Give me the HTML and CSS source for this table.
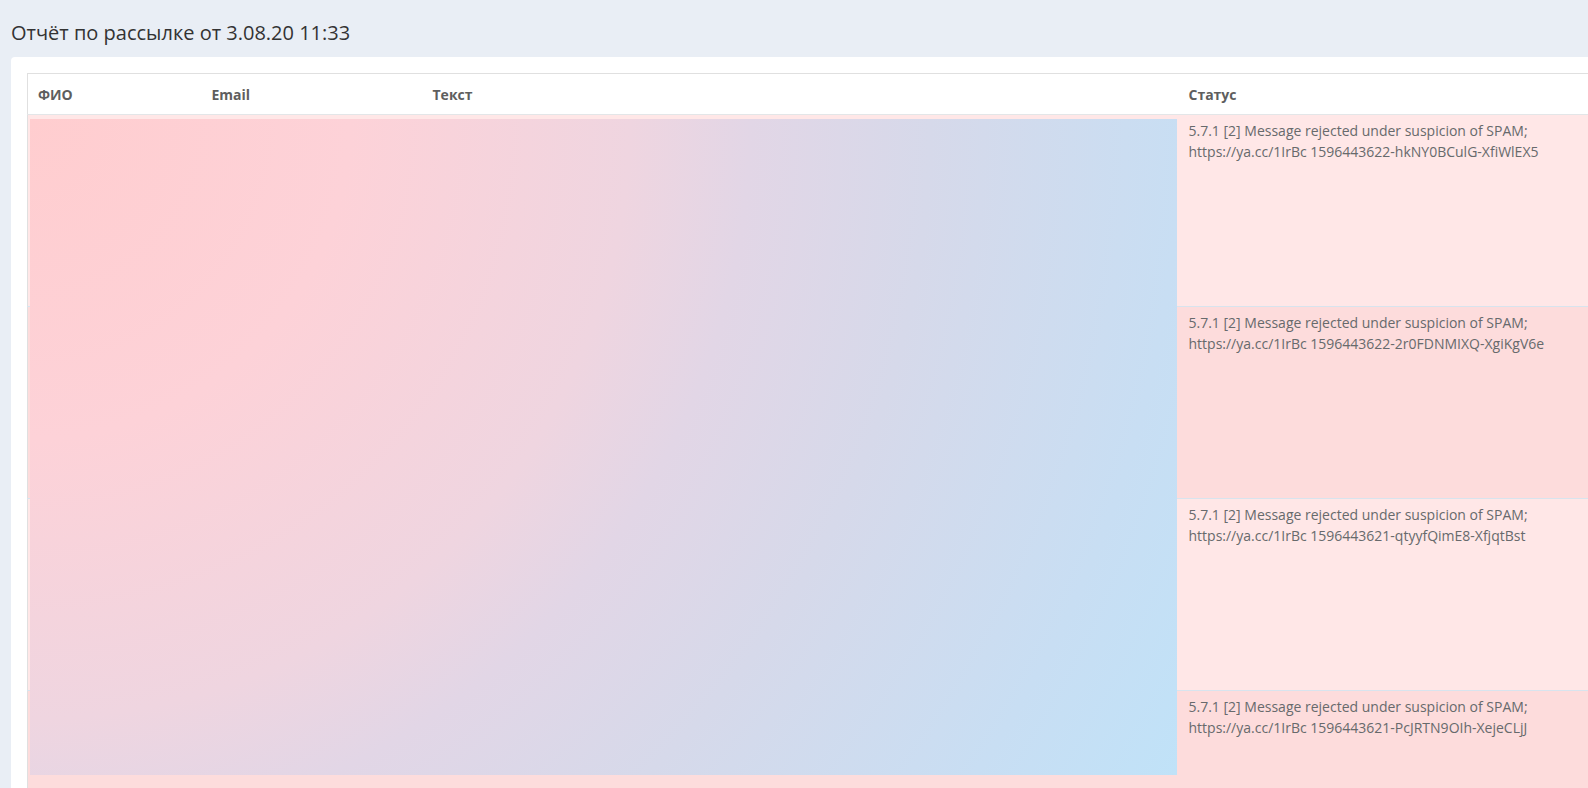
FILE: index.html
```html
<!DOCTYPE html>
<html lang="ru">
<head>
<meta charset="utf-8">
<title>Отчёт по рассылке</title>
<link rel="stylesheet" href="styles.css">
</head>
<body>
<div class="page">
  <h2 class="page-title">Отчёт по рассылке от 3.08.20 11:33</h2>
  <div class="card">
    <div class="table-wrap">
      <table class="report">
        <colgroup>
          <col class="c-fio">
          <col class="c-email">
          <col class="c-text">
          <col class="c-status">
        </colgroup>
        <thead>
          <tr><th>ФИО</th><th>Email</th><th>Текст</th><th>Статус</th></tr>
        </thead>
        <tbody>
          <tr><td></td><td></td><td></td><td>5.7.1 [2] Message rejected under suspicion of SPAM;<br>https://ya.cc/1IrBc 1596443622-hkNY0BCulG-XfiWlEX5</td></tr>
          <tr><td></td><td></td><td></td><td>5.7.1 [2] Message rejected under suspicion of SPAM;<br>https://ya.cc/1IrBc 1596443622-2r0FDNMIXQ-XgiKgV6e</td></tr>
          <tr><td></td><td></td><td></td><td>5.7.1 [2] Message rejected under suspicion of SPAM;<br>https://ya.cc/1IrBc 1596443621-qtyyfQimE8-XfjqtBst</td></tr>
          <tr><td></td><td></td><td></td><td>5.7.1 [2] Message rejected under suspicion of SPAM;<br>https://ya.cc/1IrBc 1596443621-PcJRTN9OIh-XejeCLjJ</td></tr>
        </tbody>
      </table>
      <div class="redacted"></div>
    </div>
  </div>
</div>
</body>
</html>
```

FILE: styles.css
```css
html, body {
  margin: 0;
  padding: 0;
  background: #e9eef5;
  overflow: hidden;
  height: 100%;
}
.page {
  width: 1700px;
  padding: 0 0 0 11px;
  font-family: "Open Sans", "Noto Sans", sans-serif;
  color: #676a6c;
}
.page-title {
  margin: 0;
  padding: 20px 0 0 0;
  height: 37px;
  font-size: 20px;
  font-weight: 400;
  line-height: 26px;
  color: #333;
}
.card {
  background: #fff;
  border-radius: 4px;
  padding: 16px;
  width: 1660px;
}
.table-wrap {
  position: relative;
}
.report {
  border-collapse: collapse;
  width: 100%;
  table-layout: fixed;
  border: 1px solid #e0e0e0;
  font-size: 14px;
}
.c-fio { width: 174px; }
.c-email { width: 221px; }
.c-text { width: 756px; }
.report th {
  text-align: left;
  font-weight: 700;
  color: #5e5e5e;
  height: 40px;
  padding: 0 10px;
  border-bottom: 1px solid #e3e6e8;
  font-size: 14px;
}
.report td {
  height: 181px;
  padding: 5px 10px;
  vertical-align: top;
  line-height: 21px;
  border-top: 1px solid #d8e4ee;
  background: #fddcdc;
}
.report tbody tr:nth-child(odd) td {
  background: #ffe7e7;
}
.report tbody tr:first-child td {
  border-top: none;
}
.redacted {
  position: absolute;
  left: 3px;
  top: 46px;
  width: 1147px;
  height: 656px;
  background: radial-gradient(circle at 0 0, #ffcdcf 0px, #fdd2d8 320px, #efd5e0 600px, #e2d6e6 720px, #d6d9ea 900px, #c8def3 1150px, #c0e2f8 1320px);
}
```
